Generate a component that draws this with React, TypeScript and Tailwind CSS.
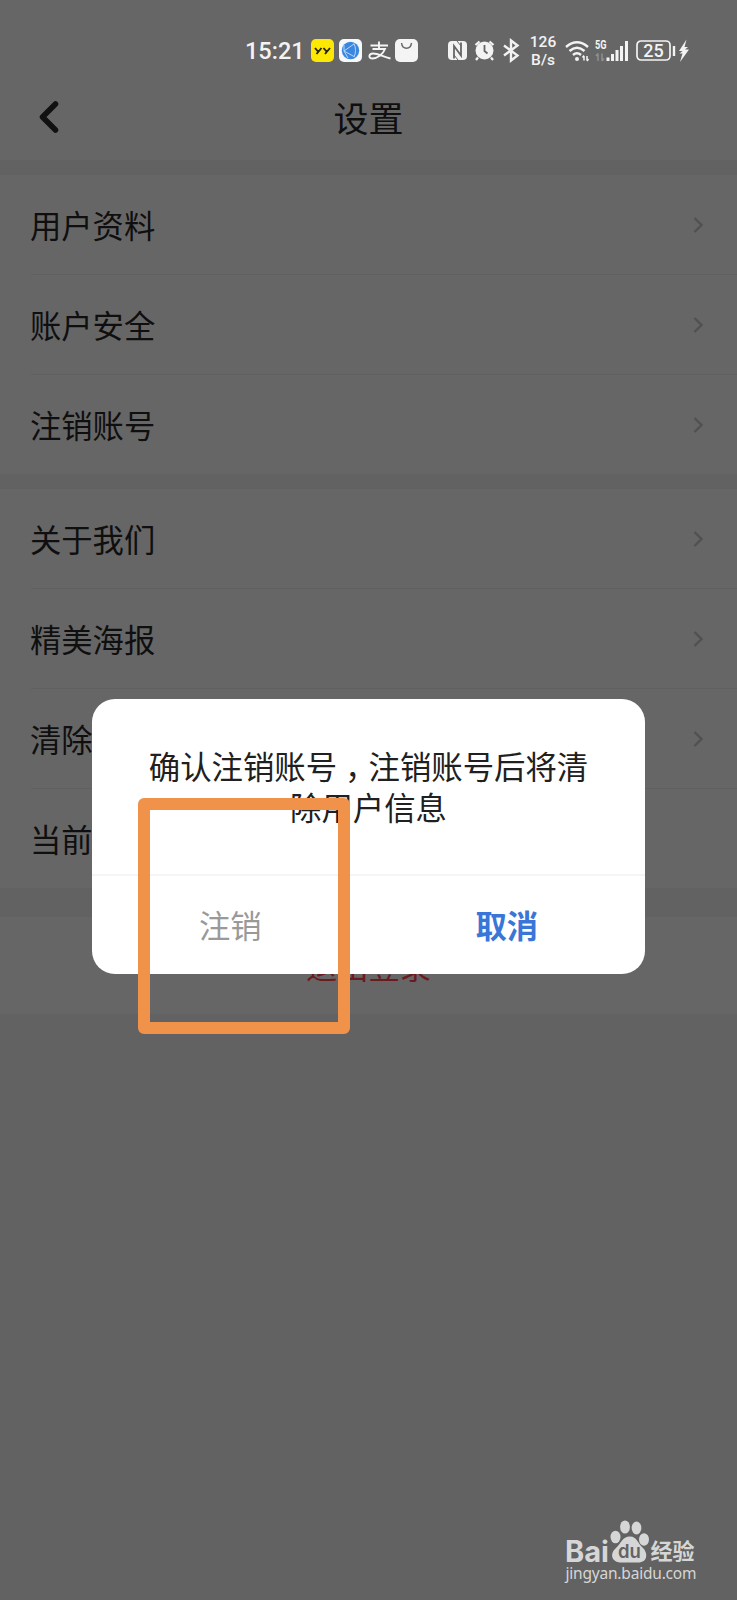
import { Fragment } from 'react';

const MENU_TOP = ['用户资料', '账户安全', '注销账号'];
const MENU_BOTTOM = ['关于我们', '精美海报', '清除缓存', '当前版本'];

function Chevron() {
  return (
    <svg className="w-[11px] h-[18px]" viewBox="0 0 11 18" fill="none" stroke="#515151" strokeWidth="2.400">
      <path d="M1.500 2L8.500 9L1.500 16" />
    </svg>
  );
}

function MenuGroup({ items, plainLast }: { items: string[]; plainLast?: boolean }) {
  return (
    <div className="bg-[#666666]">
      {items.map((label, i) => (
        <Fragment key={label}>
          {i > 0 && <div className="ml-[31px] h-[1px] bg-[#606060]" />}
          <div className="h-[99px] flex items-center justify-between pl-[30px] pr-[33px]">
            <span className="text-[31.3px] leading-none text-[#0f0f0f]">{label}</span>
            {!(plainLast && i === items.length - 1) && <Chevron />}
          </div>
        </Fragment>
      ))}
    </div>
  );
}

function AppBadges() {
  return (
    <svg className="w-[110px] h-[26px]" viewBox="0 0 110 26" fill="none">
      <rect x="0" y="1" width="23" height="23" rx="5" fill="#fce803" />
      <path d="M4 10L7 13.500M10.500 10L5.500 16M12.500 10L15.500 13.500M19 10L14 16" stroke="#2a2503" strokeWidth="1.900" />
      <rect x="28" y="1" width="23" height="23" rx="5" fill="#f6f8fa" />
      <circle cx="39.500" cy="12.500" r="8.700" fill="#3b87e0" />
      <path d="M33 13L43 6M33 13L43 18.500M43 5.500C45 10 45 15 43 19M33 7L33 13L37 20" stroke="#b4d6f8" strokeWidth="1" />
      <path d="M59.500 7.500H77M68 3.500V11M61.500 11H74C72 16.500 66 20.500 61.500 20.500C57 20.500 57.500 15.700 62 15.500C67 15.300 72 19 79.500 20.500" stroke="#f5f5f5" strokeWidth="1.900" />
      <rect x="84" y="1" width="23" height="23" rx="5" fill="#f4f4f4" />
      <path d="M90.500 5C91.500 12 99.500 12 100.500 5" stroke="#666" strokeWidth="1.500" />
    </svg>
  );
}

function RadioIcons() {
  return (
    <svg className="w-[72px] h-[26px]" viewBox="0 0 72 26" fill="none" stroke="#f3f3f3">
      <rect x="0" y="3" width="19" height="19" rx="4" fill="#f3f3f3" stroke="none" />
      <path d="M6 20.500V8L13 17.500V4.500" stroke="#666" strokeWidth="1.800" />
      <path d="M9 3L13 8M6 17L10 22" stroke="#666" strokeWidth="1" />
      <circle cx="36.500" cy="12.500" r="9" fill="#f3f3f3" stroke="none" />
      <path d="M27.500 7L31.500 3.500M41.500 3.500L45.500 7M30 19.500L28 22M43 19.500L45 22" strokeWidth="2.300" />
      <path d="M36.500 7V13L39.500 15.500" stroke="#666" strokeWidth="1.800" />
      <path d="M56 7.500L69.500 17.500L63 22.500V2.500L69.500 7.500L56 17.500" strokeWidth="2.400" />
    </svg>
  );
}

function SignalIcons() {
  return (
    <svg className="w-[64px] h-[26px]" viewBox="0 0 64 26" fill="none" stroke="#f3f3f3">
      <path d="M1 9Q12 -0.500 23 9M4.500 13Q12 6.500 19.500 13M8 17Q12 13.500 16 17" strokeWidth="2.400" />
      <circle cx="12" cy="21" r="2" fill="#f3f3f3" stroke="none" />
      <path d="M19 18V22.500M17.500 19.500L19 17.500M22 22.500V18M23.500 21L22 23" strokeWidth="1.500" />
      <text x="30" y="11" fontSize="12" fontWeight="700" fill="#f3f3f3" stroke="none" fontFamily="Roboto" textLength="11.500" lengthAdjust="spacingAndGlyphs">5G</text>
      <path d="M33 15.500V23M31 18L33 15.500M37 15.500V23M39 20.500L37 23" stroke="#8f8f8f" strokeWidth="1.500" />
      <path d="M43 19.500V23M47.500 16V23M52 12V23M56.500 8V23M61.500 3V23" strokeWidth="3" />
    </svg>
  );
}

function Battery() {
  return (
    <svg className="w-[53px] h-[26px]" viewBox="0 0 53 26" fill="none" stroke="#f3f3f3">
      <rect x="1" y="3" width="33" height="19" rx="4" strokeWidth="1.700" />
      <text x="17.500" y="19" fontSize="18" fontWeight="500" fill="#f3f3f3" stroke="none" fontFamily="Roboto" textAnchor="middle">25</text>
      <path d="M38 8V18" strokeWidth="2.400" />
      <path d="M50.500 1.500L43 13H46.500L43.500 15.500H46.500L44 24L53 11.500H49L52 9H48.500Z" fill="#f3f3f3" stroke="none" />
    </svg>
  );
}

function StatusBar() {
  return (
    <div className="h-[80px] pt-[21px] flex items-center text-[#f3f3f3] font-['Roboto',sans-serif]">
      <span className="ml-[245px] w-[58px] mt-[2px] text-[23.5px] leading-none font-medium">15:21</span>
      <div className="ml-[8px]"><AppBadges /></div>
      <div className="ml-[27px]"><RadioIcons /></div>
      <div className="ml-[9px] w-[28px] text-[15.5px] leading-[18px] font-medium text-center">
        <div>126</div>
        <div>B/s</div>
      </div>
      <div className="ml-[8px]"><SignalIcons /></div>
      <div className="ml-[7px]"><Battery /></div>
    </div>
  );
}

function Watermark() {
  return (
    <svg className="absolute left-[564px] top-[1518px] w-[136px] h-[70px]" viewBox="0 0 136 70" fill="#d6d6d6">
      <text x="1" y="43.500" fontSize="29.500" fontWeight="700" fontFamily="Inter" textLength="44" lengthAdjust="spacingAndGlyphs">Bai</text>
      <ellipse cx="51.500" cy="19" rx="5" ry="6.300" />
      <ellipse cx="61" cy="9" rx="4.900" ry="6.600" />
      <ellipse cx="72.500" cy="10" rx="4.900" ry="6.400" />
      <ellipse cx="80" cy="21.500" rx="5" ry="6.200" />
      <path d="M66 18.500C58 18.500 57 26 52 30C45 36 48 44.500 57 44.500H74C84 44.500 84 35 79 30C74 26 73 18.500 66 18.500Z" />
      <text x="65.500" y="40" fontSize="18.500" fontWeight="600" fill="#636363" fontFamily="Inter" textAnchor="middle">du</text>
      <text x="86.500" y="40.500" fontSize="22" fontWeight="700" fontFamily="Noto Sans CJK SC">经验</text>
      <text x="1.500" y="61" fontSize="15.500" fontFamily="Noto Sans" textLength="131">jingyan.baidu.com</text>
    </svg>
  );
}

function ConfirmDialog() {
  return (
    <div className="absolute left-[92px] top-[699px] w-[553px] h-[275px] rounded-[23px] bg-white flex flex-col">
      <div className="h-[175px] pt-[46px] text-center text-[31.4px] leading-[41px] text-[#202020]">
        <p>
          确认注销账号
          <span className="inline-block w-[31.4px] text-center [font-feature-settings:'halt']">，</span>
          注销账号后将清
        </p>
        <p>除用户信息</p>
      </div>
      <div className="h-[2px] bg-[#f5f5f5]" />
      <div className="flex flex-1 items-center text-[31.3px] leading-none">
        <button className="flex-1 text-[#999999]">注销</button>
        <button className="flex-1 font-bold text-[#3a76d8]">取消</button>
      </div>
    </div>
  );
}

export default function App() {
  return (
    <div className="relative w-[737px] h-[1600px] overflow-hidden bg-[#626262] font-['Noto_Sans_CJK_SC',sans-serif]">
      <div className="h-[160px] bg-[#666666]">
        <StatusBar />
        <div className="h-[76px] grid grid-cols-3 items-center">
          <svg className="ml-[37px] -mt-[2px] w-[24px] h-[34px]" viewBox="0 0 24 34" fill="none" stroke="#111" strokeWidth="5.500" strokeLinecap="round" strokeLinejoin="round">
            <path d="M18.500 4L5.500 17L18.500 30" />
          </svg>
          <h1 className="-mt-[4px] text-center text-[35px] leading-none text-[#0f0f0f]">设置</h1>
        </div>
      </div>
      <div className="mt-[15px]"><MenuGroup items={MENU_TOP} /></div>
      <div className="mt-[15px]"><MenuGroup items={MENU_BOTTOM} plainLast /></div>
      <div className="mt-[29px] h-[97px] bg-[#666666] flex items-center justify-center text-[31.3px] leading-none text-[#6b1a20]">退出登录</div>

      <ConfirmDialog />
      <div className="absolute left-[138px] top-[798px] w-[212px] h-[236px] rounded-[6px] border-[12px] border-[#f0924a]" />
      <Watermark />
    </div>
  );
}
